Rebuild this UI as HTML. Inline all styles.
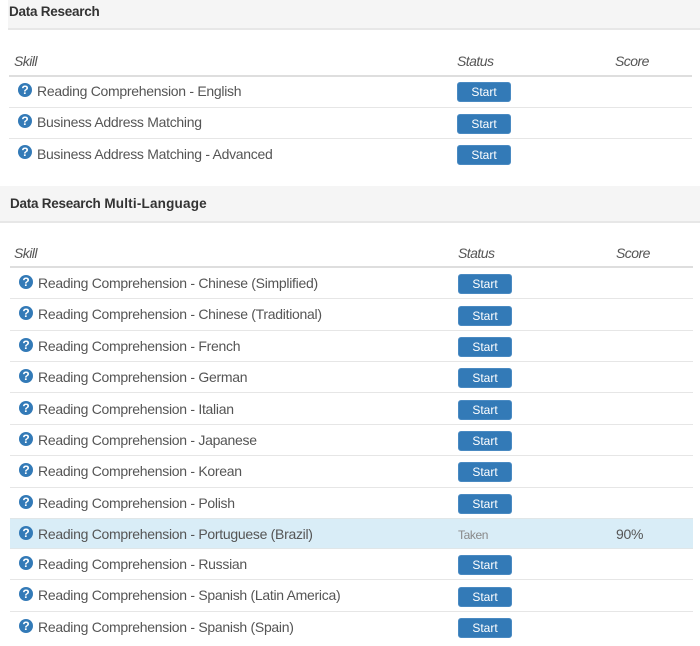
<!DOCTYPE html>
<html lang="en">
<head>
<meta charset="utf-8">
<title>Skills</title>
<style>
html,body{margin:0;padding:0;background:#fff}
body{position:relative;width:700px;height:646px;overflow:hidden;font-family:"Liberation Sans",sans-serif;color:#555;font-size:14px}
div{position:absolute;box-sizing:border-box;white-space:nowrap}
.hd{height:30px;background:#f5f5f5;border-bottom:2px solid #e7e7e7}
.ht{font-weight:bold;color:#333;font-size:13.5px;line-height:20px;height:20px}
.ht span{letter-spacing:-.25px}
.ht b{letter-spacing:.2px}
.th{font-style:italic;color:#555;font-size:14px;line-height:20px;height:20px;letter-spacing:-.55px}
.ln{height:1px;background:#e6e6e6}
.ln2{height:2px;background:#dedede}
.t{line-height:20px;height:20px;font-size:14px;color:#555;letter-spacing:-.29px;margin-top:-1px}
.i{width:14px;height:14px;border-radius:50%;background:#337ab7;color:#fff;font-weight:bold;font-size:12px;line-height:14px;text-align:center}
.b{width:54px;height:20px;border-radius:3px;background:#337ab7;border:1px solid #4a8ac2;color:#fff;font-size:12px;line-height:18px;text-align:center}
</style>
</head>
<body>
<!-- Section 1 -->
<div class="hd" style="left:8px;top:0;width:692px"></div>
<div class="ht" style="left:9px;top:2px"><span>Data Research</span></div>
<div class="th" style="left:14px;top:51px">Skill</div>
<div class="th" style="left:457px;top:51px">Status</div>
<div class="th" style="left:615px;top:51px">Score</div>
<div class="ln2" style="left:9px;top:75px;width:683px"></div>
<div class="i" style="left:18px;top:83px">?</div><div class="t" style="left:37px;top:82px">Reading Comprehension - English</div><div class="b" style="left:457px;top:82px">Start</div>
<div class="ln" style="left:9px;top:107px;width:683px"></div>
<div class="i" style="left:18px;top:114px">?</div><div class="t" style="left:37px;top:113px">Business Address Matching</div><div class="b" style="left:457px;top:114px">Start</div>
<div class="ln" style="left:9px;top:138px;width:683px"></div>
<div class="i" style="left:18px;top:145px">?</div><div class="t" style="left:37px;top:145px">Business Address Matching - Advanced</div><div class="b" style="left:457px;top:145px">Start</div>

<!-- Section 2 -->
<div class="hd" style="left:0;top:186px;width:700px;height:37px"></div>
<div class="ht" style="left:10px;top:194px"><span>Data Research</span> <b>Multi-Language</b></div>
<div class="th" style="left:14px;top:243px">Skill</div>
<div class="th" style="left:458px;top:243px">Status</div>
<div class="th" style="left:616px;top:243px">Score</div>
<div class="ln2" style="left:10px;top:266px;width:683px"></div>

<div class="i" style="left:19px;top:275px">?</div><div class="t" style="left:38px;top:274px">Reading Comprehension - Chinese (Simplified)</div><div class="b" style="left:458px;top:274px">Start</div>
<div class="ln" style="left:10px;top:298px;width:683px"></div>
<div class="i" style="left:19px;top:306px">?</div><div class="t" style="left:38px;top:305px">Reading Comprehension - Chinese (Traditional)</div><div class="b" style="left:458px;top:306px">Start</div>
<div class="ln" style="left:10px;top:330px;width:683px"></div>
<div class="i" style="left:19px;top:338px">?</div><div class="t" style="left:38px;top:337px">Reading Comprehension - French</div><div class="b" style="left:458px;top:337px">Start</div>
<div class="ln" style="left:10px;top:361px;width:683px"></div>
<div class="i" style="left:19px;top:369px">?</div><div class="t" style="left:38px;top:368px">Reading Comprehension - German</div><div class="b" style="left:458px;top:368px">Start</div>
<div class="ln" style="left:10px;top:392px;width:683px"></div>
<div class="i" style="left:19px;top:401px">?</div><div class="t" style="left:38px;top:400px">Reading Comprehension - Italian</div><div class="b" style="left:458px;top:400px">Start</div>
<div class="ln" style="left:10px;top:424px;width:683px"></div>
<div class="i" style="left:19px;top:432px">?</div><div class="t" style="left:38px;top:431px">Reading Comprehension - Japanese</div><div class="b" style="left:458px;top:431px">Start</div>
<div class="ln" style="left:10px;top:455px;width:683px"></div>
<div class="i" style="left:19px;top:463px">?</div><div class="t" style="left:38px;top:462px">Reading Comprehension - Korean</div><div class="b" style="left:458px;top:462px">Start</div>
<div class="ln" style="left:10px;top:487px;width:683px"></div>
<div class="i" style="left:19px;top:495px">?</div><div class="t" style="left:38px;top:494px">Reading Comprehension - Polish</div><div class="b" style="left:458px;top:494px">Start</div>

<div style="left:10px;top:518px;width:683px;height:31px;background:#d9edf7;border-top:1px solid #e0e6e8;border-bottom:1px solid #e0e6e8"></div>
<div class="i" style="left:19px;top:526px">?</div><div class="t" style="left:38px;top:525px">Reading Comprehension - Portuguese (Brazil)</div>
<div class="t" style="left:458px;top:526px;font-size:12px;color:#888;letter-spacing:-.4px">Taken</div>
<div class="t" style="left:616px;top:525px">90%</div>

<div class="i" style="left:19px;top:556px">?</div><div class="t" style="left:38px;top:555px">Reading Comprehension - Russian</div><div class="b" style="left:458px;top:555px">Start</div>
<div class="ln" style="left:10px;top:579px;width:683px"></div>
<div class="i" style="left:19px;top:587px">?</div><div class="t" style="left:38px;top:586px">Reading Comprehension - Spanish (Latin America)</div><div class="b" style="left:458px;top:587px">Start</div>
<div class="ln" style="left:10px;top:611px;width:683px"></div>
<div class="i" style="left:19px;top:619px">?</div><div class="t" style="left:38px;top:618px">Reading Comprehension - Spanish (Spain)</div><div class="b" style="left:458px;top:618px">Start</div>
</body>
</html>
